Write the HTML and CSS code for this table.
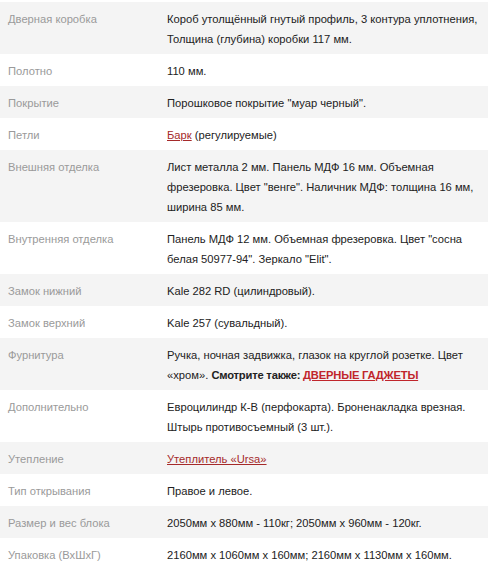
FILE: index.html
```html
<!DOCTYPE html>
<html lang="ru">
<head>
<meta charset="utf-8">
<link rel="stylesheet" href="styles.css">
</head>
<body>
<table class="specs">
  <tbody>
    <tr><td class="label">Дверная коробка</td><td class="value">Короб утолщённый гнутый профиль, 3 контура уплотнения, Толщина (глубина) коробки 117 мм.</td></tr>
    <tr><td class="label">Полотно</td><td class="value">110 мм.</td></tr>
    <tr><td class="label">Покрытие</td><td class="value">Порошковое покрытие "муар черный".</td></tr>
    <tr><td class="label">Петли</td><td class="value"><a class="link" href="#">Барк</a> (регулируемые)</td></tr>
    <tr><td class="label">Внешняя отделка</td><td class="value">Лист металла 2 мм. Панель МДФ 16 мм. Объемная фрезеровка. Цвет "венге". Наличник МДФ: толщина 16 мм, ширина 85 мм.</td></tr>
    <tr><td class="label">Внутренняя отделка</td><td class="value">Панель МДФ 12 мм. Объемная фрезеровка. Цвет "сосна белая 50977-94". Зеркало "Elit".</td></tr>
    <tr><td class="label">Замок нижний</td><td class="value">Kale 282 RD (цилиндровый).</td></tr>
    <tr><td class="label">Замок верхний</td><td class="value">Kale 257 (сувальдный).</td></tr>
    <tr><td class="label">Фурнитура</td><td class="value">Ручка, ночная задвижка, глазок на круглой розетке. Цвет «хром». <strong>Смотрите также: <a class="link link-strong" href="#">ДВЕРНЫЕ ГАДЖЕТЫ</a></strong></td></tr>
    <tr><td class="label">Дополнительно</td><td class="value">Евроцилиндр К-В (перфокарта). Броненакладка врезная. Штырь противосъемный (3 шт.).</td></tr>
    <tr><td class="label">Утепление</td><td class="value"><a class="link" href="#">Утеплитель «Ursa»</a></td></tr>
    <tr><td class="label">Тип открывания</td><td class="value">Правое и левое.</td></tr>
    <tr><td class="label">Размер и вес блока</td><td class="value">2050мм x 880мм - 110кг; 2050мм x 960мм - 120кг.</td></tr>
    <tr><td class="label">Упаковка (ВхШхГ)</td><td class="value">2160мм x 1060мм x 160мм; 2160мм x 1130мм x 160мм.</td></tr>
  </tbody>
</table>
</body>
</html>
```

FILE: styles.css
```css
html, body {
  margin: 0;
  padding: 0;
  background: #ffffff;
}
body {
  padding-top: 2px;
  font-family: "Liberation Sans", Arial, sans-serif;
  font-size: 11.2px;
  line-height: 20px;
  color: #222222;
}
.specs {
  width: 488px;
  border-collapse: collapse;
  border-spacing: 0;
  table-layout: fixed;
}
.specs tr:nth-child(odd) {
  background: #f4f4f4;
}
.specs td {
  padding: 7px 4px 5px 8px;
  vertical-align: top;
}
.label {
  width: 147px;
  color: #9a9a9a;
}
.value {
  color: #222222;
}
.link {
  color: #a52a2a;
  text-decoration: underline;
}
.link-strong {
  color: #c0252b;
}
strong {
  font-weight: bold;
  letter-spacing: -0.2px;
}
```
